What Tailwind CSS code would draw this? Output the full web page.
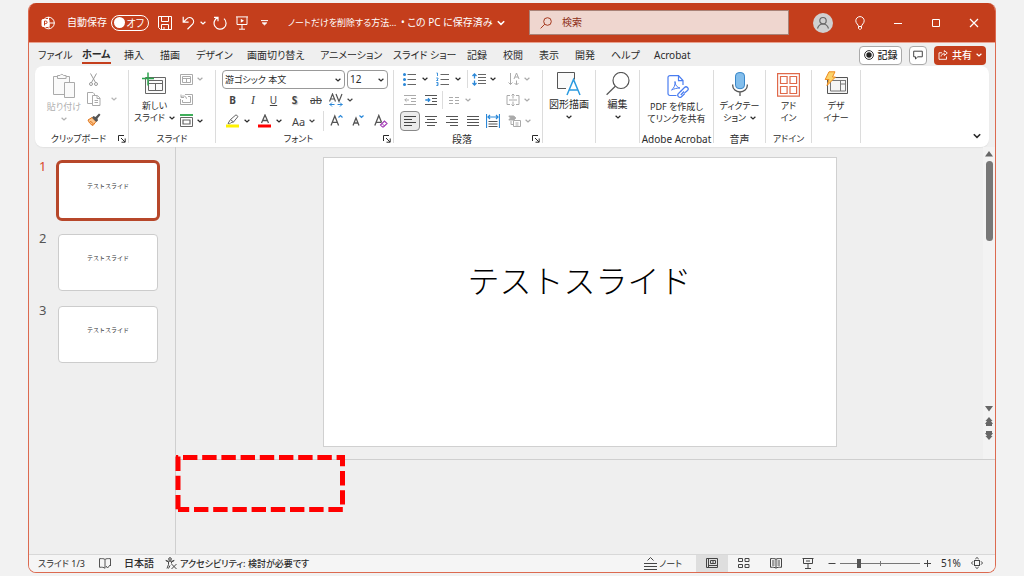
<!DOCTYPE html>
<html lang="ja">
<head>
<meta charset="utf-8">
<meta name="viewport" content="width=device-width, initial-scale=1">
<title>PowerPoint</title>
<script src="https://cdn.jsdelivr.net/npm/@tailwindcss/browser@4"></script>
</head>
<body class="h-screen overflow-hidden bg-[#f2f2f2] px-7 py-[3px] font-['Noto_Sans','Noto_Sans_CJK_JP',sans-serif] text-[10px] text-[#2b2b2b] [font-feature-settings:'palt']">
<svg class="hidden">
  <symbol id="chev" viewBox="0 0 6 4"><path d="M.6.7 3 3 5.4.7" fill="none" stroke="currentColor" stroke-width="1.2"/></symbol>
  <symbol id="launch" viewBox="0 0 8 8"><path d="M.5 6V.5H6M3 3l4 4M7.2 3.5v3.7H3.5" fill="none" stroke="currentColor"/></symbol>
</svg>
<div class="relative flex h-full flex-col overflow-hidden rounded-lg border border-t-0 border-[#dc6a50] bg-[#efefef]">

  <!-- Title bar -->
  <header class="flex h-[40px] shrink-0 items-center border-b border-[#e9a08d] bg-[#c43e1c] pl-3 text-white">
    <svg class="h-[14px] w-[14px]" viewBox="0 0 14 14" fill="none" stroke="#fff"><circle cx="7.500" cy="7" r="5.800"/><path d="M7.500 1v6h6M8 7v5.500"/><rect x="1" y="3.500" width="7" height="7" rx="1" fill="#fff"/><path d="M3.500 9.500v-4.500h1.300a1.300 1.300 0 0 1 0 2.600H3.500" stroke="#c43e1c"/></svg>
    <label class="ml-3 flex items-center whitespace-nowrap" for="autosave"><span class="w-[44px]">自動保存</span>
      <span class="relative flex h-4 w-[38px] items-center justify-end rounded-full border border-white pr-1 leading-none">
        <input id="autosave" type="checkbox" role="switch" class="absolute inset-0 m-0 cursor-pointer opacity-0">
        <span class="absolute left-0.5 h-[11px] w-[11px] rounded-full bg-white"></span>オフ
      </span></label>
    <button aria-label="保存" class="ml-[9px] w-[14px]"><svg viewBox="0 0 14 14" fill="none" stroke="#fff"><path d="M.5.5h13v13h-11l-2-2zM3.500.5v5h7v-5M3.500 13.500v-5h7v5M6 11v2"/></svg></button>
    <button aria-label="元に戻す" class="ml-2.5 flex items-center gap-1"><svg class="w-[14px]" viewBox="0 0 14 14" fill="none" stroke="#fff" stroke-width="1.200"><path d="M1.200.8v5.400h5.400M1.500 6l3.200-3.200a4 4 0 0 1 5.900 5.400L5.500 13.200"/></svg><svg class="h-1 w-1.5"><use href="#chev"/></svg></button>
    <button aria-label="やり直し" class="ml-[7px] w-[14px]"><svg viewBox="0 0 14 14" fill="none" stroke="#fff" stroke-width="1.200"><path d="M1 1.300h4v4M4.800 1.600a6 6 0 1 0 6.200 1"/></svg></button>
    <button aria-label="最初から開始" class="ml-2 w-[14px]"><svg viewBox="0 0 14 14" fill="none" stroke="#fff"><path d="M1 .9h12M2 1v7.500h10V1M7 8.500v4.500M4 13.200h6"/><path d="M5.800 2.700v4l3.200-2z" fill="#fff" stroke="none"/></svg></button>
    <button aria-label="クイック アクセス ツール バーのユーザー設定" class="ml-3 w-[7px]"><svg viewBox="0 0 7 6" fill="none" stroke="#fff"><path d="M0 .6h7"/><path d="M1.200 2.800h4.600L3.500 5z" fill="#fff" stroke-width=".8"/></svg></button>
    <button class="ml-5 flex w-[241px] items-center whitespace-nowrap text-left"><span class="w-[113px] text-[9px]">ノートだけを削除する方法…</span><span>• この PC に保存済み</span><svg class="ml-1 h-1.5 w-2"><use href="#chev"/></svg></button>
    <label for="search" class="flex h-[25px] min-w-0 max-w-[260px] flex-1 items-center border border-[#a98277] bg-[#efd6cf] pl-2.5 text-[#a5391f]">
      <svg class="mr-2.5 h-3 w-3 shrink-0" viewBox="0 0 12 12" fill="none" stroke="currentColor"><circle cx="7.500" cy="4.500" r="3.800"/><path d="M4.800 7.200.6 11.400"/></svg>
      <input id="search" type="search" placeholder="検索" class="min-w-0 flex-1 bg-transparent outline-none placeholder:text-[#8d2f18] placeholder:opacity-100">
    </label>
    <div class="ml-6 flex items-center">
      <button aria-label="アカウント" class="w-5"><svg viewBox="0 0 20 20"><circle cx="10" cy="10" r="10" fill="#d0d0d0"/><g fill="none" stroke="#666" stroke-width="1.200"><circle cx="10" cy="7.700" r="3.200"/><path d="M4.500 15.500C5.500 12.200 7.500 11 10 11s4.500 1.200 5.500 4.500"/></g></svg></button>
      <button aria-label="ヒント" class="ml-[22px] w-[10px]"><svg viewBox="0 0 10 14" fill="none" stroke="#fff"><path d="M3.500 10.500C3.500 8.500.8 7.600.8 4.800a4.200 4.200 0 0 1 8.400 0c0 2.800-2.700 3.700-2.700 5.700zM3.500 10.500v1.800l1 1h1l1-1v-1.800"/></svg></button>
      <button aria-label="最小化" class="ml-7 w-[10px]"><svg viewBox="0 0 10 10" stroke="#fff"><path d="M1 5.500h8"/></svg></button>
      <button aria-label="最大化" class="ml-7 w-[10px]"><svg viewBox="0 0 10 10" fill="none" stroke="#fff"><path d="M1.500 1.500h7v7h-7z"/></svg></button>
      <button aria-label="閉じる" class="ml-7 w-[10px]"><svg viewBox="0 0 10 10" stroke="#fff" stroke-width="1.200"><path d="m1 1 8 8M9 1 1 9"/></svg></button>
    </div>
  </header>

  <!-- Ribbon tabs -->
  <nav class="flex h-[23px] shrink-0 items-center whitespace-nowrap px-[9px] pt-px">
    <a href="#" class="w-[44px]">ファイル</a>
    <a href="#" class="w-[42px] font-bold"><span class="inline-block border-b-2 border-[#c43e1c]">ホーム</span></a>
    <a href="#" class="w-9">挿入</a>
    <a href="#" class="w-9">描画</a>
    <a href="#" class="w-[51px]">デザイン</a>
    <a href="#" class="w-[73px]">画面切り替え</a>
    <a href="#" class="w-[73px]">アニメーション</a>
    <a href="#" class="w-[74px]">スライド ショー</a>
    <a href="#" class="w-9">記録</a>
    <a href="#" class="w-9">校閲</a>
    <a href="#" class="w-9">表示</a>
    <a href="#" class="w-9">開発</a>
    <a href="#" class="w-[43px]">ヘルプ</a>
    <a href="#">Acrobat</a>
    <div class="ml-auto flex items-center gap-[7px]">
      <button class="flex h-[19px] w-[43px] items-center justify-center gap-1 rounded border border-[#aaa] bg-white font-medium"><svg class="w-[10px]" viewBox="0 0 10 10"><circle cx="5" cy="5" r="4.400" fill="none" stroke="#333"/><circle cx="5" cy="5" r="2.700" fill="#222"/></svg>記録</button>
      <button aria-label="コメント" class="flex h-[19px] w-[18px] items-center justify-center rounded border border-[#aaa] bg-white"><svg class="w-[10px]" viewBox="0 0 10 10" fill="none" stroke="#444"><path d="M.7 1.200h8.600v5.600H4.800L2.500 9V6.800H.7z"/></svg></button>
      <button class="flex h-[19px] w-[52px] items-center justify-center gap-1 rounded bg-[#c43e1c] font-medium text-white"><svg class="w-[10px]" viewBox="0 0 10 10" fill="none" stroke="#fff" stroke-width=".9"><path d="M4 2.800H1v6.500h7.500V6.500M3 6.500c.4-2 1.500-2.800 3.300-2.800V5.500L9.300 3 6.300.6v1.600"/></svg>共有<svg class="h-1 w-1.5"><use href="#chev"/></svg></button>
    </div>
  </nav>

  <!-- Ribbon -->
  <section class="mx-1.5 flex h-[81px] shrink-0 rounded-lg bg-white text-[9px] shadow-[0_1px_1px_#e2e2e2]">
    <div class="flex w-[93px] shrink-0 flex-col">
      <div class="flex h-[66px]">
        <button class="flex w-[50px] flex-col items-center whitespace-nowrap pl-2 pt-[7px] leading-[13px] text-[#b0b0b0]">
          <svg class="h-[25px] w-[24px]" viewBox="0 0 24 25" fill="#fafafa" stroke="#aaa"><path d="M1.500 3.500h16v18h-16z"/><path d="M5.500 2.500H8a2 2 0 0 1 3.600 0h2.500v3h-8.600z"/><path d="M12.500 9.500h10v15h-10z"/></svg>
          <span class="mt-0.5">貼り付け</span><svg class="mt-1 h-1 w-1.5"><use href="#chev"/></svg></button>
        <div class="flex flex-col pt-[3px]">
          <button aria-label="切り取り" class="flex h-[20px] items-center pl-1"><svg class="h-[13px] w-[9px]" viewBox="0 0 9 13" fill="none" stroke="#999"><path d="M1.500.5l5 9M7.500.5l-5 9"/><circle cx="2" cy="11" r="1.500"/><circle cx="7" cy="11" r="1.500"/></svg></button>
          <button aria-label="コピー" class="flex h-[20px] items-center gap-2.5 pl-0.5 text-[#b5b5b5]"><svg class="h-[14px] w-[14px]" viewBox="0 0 14 14" fill="#fff" stroke="#aaa"><path d="M5 11.500H.5v-11H6l1.500 1.500v2"/><path d="M5.500 3.500h5l2.500 2.500v7.500H5.500z"/><path d="M7.500 8.500h3.500M7.500 10.500h3.500M10 3.500v3h3"/></svg><svg class="h-1 w-1.5"><use href="#chev"/></svg></button>
          <button aria-label="書式のコピー/貼り付け" class="flex h-[20px] items-center pl-0.5"><svg class="h-[13px] w-[14px]" viewBox="0 0 14 13"><path d="M1 7l4-2.500 4 4L6 12.500C3.500 11.500 2 9.500 1 7z" fill="#fbc58d" stroke="#e0741a"/><path d="M3 8.500l2.500 1M4.500 12l2-2" stroke="#e0741a"/><path d="M5 4.500l1.500-1.500 2 1L12 .6l1.500 1.200L10.500 5.500 11 7.500 9.200 9z" fill="#555"/></svg></button>
        </div>
      </div>
      <div class="flex h-[14px] items-center"><span class="w-[87px] text-center">クリップボード</span><button aria-label="クリップボードのオプション" class="-ml-1 w-2"><svg class="h-2 w-2"><use href="#launch"/></svg></button></div>
    </div>
    <div class="my-1 w-px shrink-0 bg-[#dcdcdc]"></div>

    <div class="flex w-[86px] shrink-0 flex-col">
      <div class="flex h-[66px]">
        <button class="flex w-[51px] flex-col items-center whitespace-nowrap pt-1.5 leading-[13px]">
          <svg class="h-[26px] w-[25px]" viewBox="0 0 25 26" fill="none" stroke="#666"><path d="M3.500 5.500h20v16h-20z" fill="#fafafa"/><path d="M6.500 8.500h14v10h-14zM6.500 11.500h14M13.500 11.500v7"/><path d="M6 .5v13M0 6.500h12" stroke="#2da44e" stroke-width="1.500"/></svg>
          <span class="mt-px">新しい</span><span class="flex items-center gap-1 leading-[12px]">スライド<svg class="h-1 w-1.5"><use href="#chev"/></svg></span></button>
        <div class="flex flex-col pt-[3px]">
          <button aria-label="レイアウト" class="flex h-[20px] items-center gap-1 text-[#aaa]"><svg class="h-[11px] w-[13px]" viewBox="0 0 13 11" fill="none" stroke="#aaa"><path d="M.5.5h12v10H.5zM2.500 2.500h8v6h-8zM2.500 4.500h8M6.500 4.500v4"/></svg><svg class="h-1 w-1.5"><use href="#chev"/></svg></button>
          <button aria-label="リセット" class="flex h-[20px] items-center"><svg class="h-[12px] w-[13px]" viewBox="0 0 13 12" fill="none" stroke="#aaa"><path d="M5 1.500h7.500v10H.5V6M8 3.500h2.500v6h-8V7M1 1.500v3h3M1 4.300a3 3 0 0 1 5.500 1.500"/></svg></button>
          <button aria-label="セクション" class="flex h-[21px] items-center gap-1 pt-0.5"><svg class="h-[13px] w-[13px]" viewBox="0 0 13 13" fill="none" stroke="#666"><path d="M0 1h13" stroke="#3fae5a" stroke-width="2"/><path d="M.5 3.500h12v9H.5z"/><path d="M3 6h7v4H3z" stroke-width="1.200"/></svg><svg class="h-1 w-1.5"><use href="#chev"/></svg></button>
        </div>
      </div>
      <div class="h-[14px] text-center leading-[14px]">スライド</div>
    </div>
    <div class="my-1 w-px shrink-0 bg-[#dcdcdc]"></div>

    <div class="flex w-[177px] shrink-0 flex-col">
      <div class="flex h-6 items-center gap-0.5 pl-1.5 pt-0.5">
        <div class="relative"><select aria-label="フォント" class="block h-[19px] w-[123px] appearance-none rounded border border-[#999] bg-white pl-0.5 text-[9px] leading-[17px]"><option>游ゴシック 本文</option></select><svg class="pointer-events-none absolute right-1 top-2 h-1 w-1.5"><use href="#chev"/></svg></div>
        <div class="relative"><select aria-label="フォント サイズ" class="block h-[19px] w-[41px] appearance-none rounded border border-[#999] bg-white pl-0.5 text-[10px] leading-[17px]"><option>12</option></select><svg class="pointer-events-none absolute right-1 top-2 h-1 w-1.5"><use href="#chev"/></svg></div>
      </div>
      <div class="flex h-[20px] items-center pl-1.5 text-[10px] text-[#444]">
        <button class="w-[21px] font-bold">B</button><button class="w-5 font-['Liberation_Serif'] text-[12px] italic">I</button><button class="w-[21px] underline">U</button><button class="w-[21px] font-bold [text-shadow:1px_1px_1px_#bbb]">S</button><button class="w-[22px] line-through">ab</button>
        <button aria-label="文字の間隔" class="ml-0.5 flex items-center gap-1"><svg class="h-[14px] w-[14px]" viewBox="0 0 14 14" fill="none"><path d="M.5 8.500 3.500 1l3 7.500M1.500 6h4M7 1l3 7.500L13 1" stroke="#555" stroke-width="1.200"/><path d="M.5 11.500h5M8.500 11.500h5M3 9.500l-2 2 2 2M11 9.500l2 2-2 2" stroke="#2b88d8"/></svg><svg class="h-1 w-1.5"><use href="#chev"/></svg></button>
      </div>
      <div class="flex h-[22px] items-center pl-2.5">
        <button aria-label="蛍光ペンの色" class="flex items-center gap-1"><svg class="h-[14px] w-[14px]" viewBox="0 0 14 14" fill="none"><path d="M2 9.500 4.500 5.500 10 .8l2 1.700L7.500 8l-2.500.5L3.500 10zM4.500 5.500 7.500 8" stroke="#666"/><path d="M0 12h13" stroke="#fff200" stroke-width="3"/></svg><svg class="h-1 w-1.5"><use href="#chev"/></svg></button>
        <button aria-label="フォントの色" class="ml-2 flex items-center gap-1"><svg class="h-[14px] w-[14px]" viewBox="0 0 14 14" fill="none"><path d="M3.500 9 7 1l3.500 8M4.700 6.500h4.600" stroke="#555" stroke-width="1.300"/><path d="M0 12h13" stroke="#f00" stroke-width="3"/></svg><svg class="h-1 w-1.5"><use href="#chev"/></svg></button>
        <button class="ml-2.5 flex items-center gap-1 text-[11px] leading-none text-[#444]">Aa<svg class="h-1 w-1.5"><use href="#chev"/></svg></button>
        <span class="ml-2 mr-1.5 h-5 w-px bg-[#dcdcdc]"></span>
        <button aria-label="フォント サイズの拡大" class="w-[14px]"><svg viewBox="0 0 14 14" fill="none"><path d="M1 11.500 4.800 2l3.800 9.500M2.300 8.300h5" stroke="#555" stroke-width="1.300"/><path d="M8.500 3.500l2-2 2 2" stroke="#2b88d8" stroke-width="1.200"/></svg></button>
        <button aria-label="フォント サイズの縮小" class="ml-2 w-[14px]"><svg viewBox="0 0 14 14" fill="none"><path d="M1 11.500 4 4l3 7.500M2 9h4" stroke="#555" stroke-width="1.300"/><path d="M7.500 1.500l2 2 2-2" stroke="#2b88d8" stroke-width="1.200"/></svg></button>
        <button aria-label="書式のクリア" class="ml-2 w-[14px]"><svg viewBox="0 0 14 14" fill="none"><path d="M.8 11.500 4.800 1.500l2.800 7M2.300 8.300h5" stroke="#555" stroke-width="1.300"/><path d="M6.500 11l4-4 2.500 2.500-3.500 3.500h-1z" fill="#fff" stroke="#a33bb5" stroke-width="1.200"/><path d="M8 9.500l2.500 2.500" stroke="#a33bb5"/></svg></button>
      </div>
      <div class="flex h-[14px] items-center"><span class="w-[165px] text-center">フォント</span><button aria-label="フォントのオプション" class="ml-0.5 w-2"><svg class="h-2 w-2"><use href="#launch"/></svg></button></div>
    </div>
    <div class="my-1 w-px shrink-0 bg-[#dcdcdc]"></div>

    <div class="flex w-[148px] shrink-0 flex-col">
      <div class="flex h-6 items-center pl-[9px] pt-0.5">
        <button aria-label="箇条書き" class="flex items-center gap-1.5"><svg class="h-[14px] w-[13px]" viewBox="0 0 13 14"><path d="M4.500 2.500H13M4.500 7.500H13M4.500 12.500H13" stroke="#666"/><g fill="#2b88d8"><circle cx="1.500" cy="2.500" r="1.500"/><circle cx="1.500" cy="7.500" r="1.500"/><circle cx="1.500" cy="12.500" r="1.500"/></g></svg><svg class="h-1 w-1.5"><use href="#chev"/></svg></button>
        <button aria-label="段落番号" class="ml-2 flex items-center gap-1.5"><svg class="h-[14px] w-[13px]" viewBox="0 0 13 14" fill="none"><path d="M4.500 2.500H13M4.500 7.500H13M4.500 12.500H13" stroke="#666"/><path d="M.5 1h1v3M.3 6h1.700v1L.5 8.500h1.700M.3 10.500h1.700v3H.3M.8 12H2" stroke="#2b88d8" stroke-width=".9"/></svg><svg class="h-1 w-1.5"><use href="#chev"/></svg></button>
        <span class="ml-1.5 mr-1 h-[18px] w-px bg-[#dcdcdc]"></span>
        <button aria-label="行間" class="flex items-center gap-1"><svg class="h-[13px] w-[14px]" viewBox="0 0 14 13" fill="none"><path d="M6 1.500h8M6 4.500h8M6 7.500h8M6 10.500h8" stroke="#666"/><path d="M2.500 1v4.500M2.500 7.500V12M.5 3l2-2 2 2M.5 10l2 2 2-2" stroke="#2b88d8" stroke-width="1.300"/></svg><svg class="h-1 w-1.5"><use href="#chev"/></svg></button>
        <button aria-label="文字列の方向" class="ml-3 flex items-center gap-1 text-[#aaa]"><svg class="h-[14px] w-[12px]" viewBox="0 0 12 14" fill="none" stroke="#aaa"><path d="M2.500 1v11.500M.5 10.500l2 2 2-2M6 7l2.500-6L11 7M7 5h3M8.500 8.500v4M6.500 11l2 2 2-2"/></svg><svg class="h-1 w-1.5"><use href="#chev"/></svg></button>
      </div>
      <div class="flex h-[20px] items-center pl-2.5">
        <button aria-label="インデントを減らす" class="w-3"><svg viewBox="0 0 12 12" fill="none" stroke="#aaa"><path d="M0 1.500h12M7 4.500h5M7 7.500h5M0 10.500h12M.8 6H5M2.500 4.300.8 6l1.700 1.700"/></svg></button>
        <button aria-label="インデントを増やす" class="ml-[9px] w-3"><svg viewBox="0 0 12 12" fill="none" stroke="#555"><path d="M0 1.500h12M7 4.500h5M7 7.500h5M0 10.500h12"/><path d="M.3 6h4.500M3 4.200 4.800 6 3 7.800" stroke="#2b88d8" stroke-width="1.300"/></svg></button>
        <span class="ml-[5px] mr-1.5 h-[18px] w-px bg-[#dcdcdc]"></span>
        <button aria-label="段の追加または削除" class="flex items-center gap-1.5 text-[#aaa]"><svg class="h-[9px] w-[10px]" viewBox="0 0 10 9" stroke="#aaa"><path d="M0 1.500h4M6 1.500h4M0 4.500h4M6 4.500h4M0 7.500h4M6 7.500h4"/></svg><svg class="h-1 w-1.5"><use href="#chev"/></svg></button>
        <button aria-label="文字の配置" class="ml-[35px] flex items-center gap-1 text-[#aaa]"><svg class="h-[12px] w-[14px]" viewBox="0 0 14 12" fill="none" stroke="#aaa"><path d="M4 1.500H1v9h3M10 1.500h3v9h-3M3 6h8M7 0v4.500M7 7.500V12M5.500 1.500 7 0l1.500 1.500M5.500 10.500 7 12l1.500-1.500"/></svg><svg class="h-1 w-1.5"><use href="#chev"/></svg></button>
      </div>
      <div class="flex h-[22px] items-center pl-1.5">
        <button aria-label="左揃え" class="flex h-5 w-5 items-center justify-center rounded border border-[#888] bg-[#ebebeb]"><svg class="h-[12px] w-[12px]" viewBox="0 0 12 12" stroke="#444"><path d="M0 1.500h12M0 4.500h8M0 7.500h12M0 10.500h8"/></svg></button>
        <button aria-label="中央揃え" class="ml-[5px] w-3"><svg viewBox="0 0 12 12" stroke="#555"><path d="M0 1.500h12M2 4.500h8M0 7.500h12M2 10.500h8"/></svg></button>
        <button aria-label="右揃え" class="ml-[9px] w-3"><svg viewBox="0 0 12 12" stroke="#555"><path d="M0 1.500h12M4 4.500h8M0 7.500h12M4 10.500h8"/></svg></button>
        <button aria-label="両端揃え" class="ml-[9px] w-3"><svg viewBox="0 0 12 12" stroke="#555"><path d="M0 1.500h12M0 4.500h12M0 7.500h12M0 10.500h12"/></svg></button>
        <button aria-label="均等割り付け" class="ml-[7px] w-[14px]"><svg viewBox="0 0 14 14" fill="none"><path d="M2.500 7.500h9M2.500 10h9M2.500 12.500h9" stroke="#555"/><path d="M.5 0v14M13.500 0v14M2 3h10M4 1 2 3l2 2M10 1l2 2-2 2" stroke="#2b88d8" stroke-width="1.200"/></svg></button>
        <button aria-label="SmartArt に変換" class="ml-2 flex items-center gap-1 text-[#aaa]"><svg class="h-[12px] w-[13px]" viewBox="0 0 13 12" fill="none" stroke="#aaa"><path d="M.8 1h5l2 2-2 2h-5l1.700-2z" fill="#aaa"/><path d="M3 6v3.500h3"/><path d="M5.500 5.500h7v6h-7zM7.500 8h3M7.500 10h3"/></svg><svg class="h-1 w-1.5"><use href="#chev"/></svg></button>
      </div>
      <div class="flex h-[14px] items-center text-[10px]"><span class="w-[136px] text-center">段落</span><button aria-label="段落のオプション" class="ml-0.5 w-2"><svg class="h-2 w-2"><use href="#launch"/></svg></button></div>
    </div>
    <div class="my-1 w-px shrink-0 bg-[#dcdcdc]"></div>

    <button class="flex w-[52px] shrink-0 flex-col items-center whitespace-nowrap pt-1.5 text-[10px] leading-[13px]">
      <svg class="h-[25px] w-[24px]" viewBox="0 0 24 25" fill="none"><path d="M9 16.500H.5V.5h17v7" fill="#fafafa" stroke="#555"/><path d="M10 23 16.500 7.500 23 23M12.300 18h8.500" stroke="#2b9be0" stroke-width="1.500"/></svg>
      <span class="mt-px">図形描画</span><svg class="mt-1 h-1 w-1.5"><use href="#chev"/></svg></button>
    <div class="my-1 w-px shrink-0 bg-[#dcdcdc]"></div>
    <button class="flex w-[43px] shrink-0 flex-col items-center whitespace-nowrap pt-1.5 text-[10px] leading-[13px]">
      <svg class="h-[25px] w-[24px]" viewBox="0 0 24 25" fill="none" stroke="#555" stroke-width="1.200"><circle cx="15" cy="8.500" r="8"/><path d="M9.300 14.200.6 22.800"/></svg>
      <span class="mt-px">編集</span><svg class="mt-1 h-1 w-1.5"><use href="#chev"/></svg></button>
    <div class="my-1 w-px shrink-0 bg-[#dcdcdc]"></div>

    <div class="flex w-[73px] shrink-0 flex-col items-center whitespace-nowrap">
      <button class="flex h-[66px] flex-col items-center pt-[9px] leading-[12px]"><svg class="ml-1 h-[24px] w-[22px]" viewBox="0 0 22 24" fill="none" stroke="#4a7df0" stroke-width="1.200"><path d="M9.500 20.500H3a2 2 0 0 1-2-2V2.600A2 2 0 0 1 3 .6h8.500L16 5.500V10M11.500.6v5H16"/><path d="M4.500 15c2.500-1.500 4-5.500 3.500-8.500 0 4 2.500 6 5 6.500-3 0-6 .8-8.500 2z" stroke-width="1"/><path d="m14 16 3.500-3.500a2 2 0 0 1 3 3L17.500 18M17 16.500 13.800 20"/><path d="m14.500 15.500-3 3a2 2 0 0 0 3 3.200l3.300-3.200"/></svg>
      <span class="mt-0.5">PDF を作成し<br>てリンクを共有</span></button>
      <div class="h-[14px] text-[10px] leading-[14px]">Adobe Acrobat</div>
    </div>
    <div class="my-1 w-px shrink-0 bg-[#dcdcdc]"></div>

    <div class="flex w-[51px] shrink-0 flex-col items-center whitespace-nowrap">
      <button class="flex h-[66px] flex-col items-center pt-1.5 leading-[12px]"><svg class="h-[26px] w-[16px]" viewBox="0 0 16 26" fill="none"><rect x="3.500" y=".6" width="9" height="16" rx="3.500" fill="#83beec" stroke="#3a87c8"/><path d="M.7 12.500v1a7.300 6.500 0 0 0 14.600 0v-1M8 20v4" stroke="#555" stroke-width="1.300"/></svg>
      <span class="mt-0.5">ディクテー</span><span class="flex items-center gap-1">ション<svg class="h-1 w-1.5"><use href="#chev"/></svg></span></button>
      <div class="h-[14px] text-[10px] leading-[14px]">音声</div>
    </div>
    <div class="my-1 w-px shrink-0 bg-[#dcdcdc]"></div>

    <div class="flex w-[45px] shrink-0 flex-col items-center whitespace-nowrap">
      <button class="flex h-[66px] flex-col items-center pt-[7px] leading-[12px]"><svg class="h-[24px] w-[23px]" viewBox="0 0 23 24" fill="none" stroke="#e0694a" stroke-width="1.200"><path d="M.6.6h21.800v22.600H.6zM3.500 3.500h6.600v7H3.500zM13 3.500h6.600v7H13zM3.500 13.500h6.600v7H3.500zM13 13.500h6.600v7H13z"/></svg>
      <span class="mt-[3px]">アド<br>イン</span></button>
      <div class="h-[14px] leading-[14px]">アドイン</div>
    </div>
    <div class="my-1 w-px shrink-0 bg-[#dcdcdc]"></div>

    <button class="flex w-[48px] shrink-0 flex-col items-center whitespace-nowrap pt-[5px] leading-[12px]"><svg class="h-[26px] w-[25px]" viewBox="0 0 25 26" fill="none"><path d="M3.500 6.500h20v16h-20z" fill="#f5f5f5" stroke="#555"/><path d="M6 9.500h15.500M6.500 9v11h15V9M16.500 9.500V20M16.500 13h5" stroke="#777"/><path d="M5 .8h6L8.500 6h3L3 14.500 5 8.500H1.200z" fill="#fbd26a" stroke="#ee8a1c"/></svg>
      <span class="mt-[3px]">デザ<br>イナー</span></button>
    <div class="my-1 w-px shrink-0 bg-[#dcdcdc]"></div>
    <button aria-label="リボンを折りたたむ" class="mb-2 ml-auto mr-2 self-end"><svg class="h-1.5 w-2"><use href="#chev"/></svg></button>
  </section>

  <!-- Workspace -->
  <main class="flex min-h-0 flex-1">
    <aside class="flex w-[147px] shrink-0 flex-col gap-4 border-r border-[#cfcfcf] pl-[9px] pt-[15px] text-[13px]">
      <button class="flex h-14 items-start text-[#d8482a]"><span class="w-[20px] pl-px text-left leading-[9px]">1</span><span class="-mx-0.5 -my-0.5 flex h-[61px] w-[104px] justify-center rounded-md border-[3px] border-[#b7472a] bg-white pt-[19px] text-[6px] leading-[8px] text-[#333] [font-feature-settings:normal]">テストスライド</span></button>
      <button class="flex h-14 items-start text-[#555]"><span class="w-[20px] pl-px text-left leading-[9px]">2</span><span class="flex h-[57px] w-[100px] justify-center rounded border border-[#ccc] bg-white pt-[19px] text-[6px] leading-[8px] text-[#333] [font-feature-settings:normal]">テストスライド</span></button>
      <button class="flex h-14 items-start text-[#555]"><span class="w-[20px] pl-px text-left leading-[9px]">3</span><span class="flex h-[57px] w-[100px] justify-center rounded border border-[#ccc] bg-white pt-[19px] text-[6px] leading-[8px] text-[#333] [font-feature-settings:normal]">テストスライド</span></button>
    </aside>
    <div class="flex min-w-0 flex-1 flex-col">
      <div class="flex min-h-0 flex-1">
        <div class="flex min-w-0 flex-1 justify-center pt-[10px]">
          <div class="flex h-[290px] w-[514px] flex-col items-center border border-[#d0d0d0] bg-white pt-[99px] font-['Noto_Sans_CJK_JP',sans-serif]">
            <h1 class="whitespace-nowrap text-[32px] font-light leading-[44px] text-black [font-feature-settings:normal]">テストスライド</h1>
          </div>
        </div>
        <div class="flex w-3 flex-col items-center bg-[#f3f3f3] pt-1">
          <svg class="h-[6px] w-[8px]" viewBox="0 0 8 6"><path d="M4 0l4 5.500H0z" fill="#666"/></svg>
          <div class="mt-1 h-[80px] w-[7px] rounded bg-[#777]"></div>
          <svg class="mb-[18px] mt-auto h-[36px] w-[8px]" viewBox="0 0 8 36" fill="#666"><path d="M0 1h8L4 6.500zM4 12l3.500 4H6l2 3H7v2H1v-2H0l2-3H.5zM1 26h6v2h1l-2 3h1.500L4 35 .5 31H2l-2-3h1z"/></svg>
        </div>
      </div>
      <div class="relative h-[95px] shrink-0 border-t border-[#cfcfcf]">
        <svg class="absolute -left-px -top-[5px] h-[57px] w-[170px]" viewBox="175 455 170 57" fill="none" stroke="#f00" stroke-width="5" stroke-dasharray="14.400 4.800"><path d="M176 457.500H345" stroke-dashoffset="12.200"/><path d="M342.500 455V507" stroke-dashoffset="3.200"/><path d="M178 509.500H343" stroke-dashoffset="3.200"/><path d="M178 456.500V510"/></svg>
      </div>
    </div>
  </main>

  <!-- Status bar -->
  <footer class="flex h-[18px] shrink-0 items-center whitespace-nowrap border-t border-[#d8d8d8] bg-[#f5f5f5] pb-px pl-[9px] pr-3 leading-none">
    <span class="w-[61px] text-[9px]">スライド 1/3</span>
    <svg class="h-[11px] w-[12px]" viewBox="0 0 12 11" fill="none" stroke="#555"><path d="M6 1.500C5 .5 3 .5.500.7v8.600C3 9.100 5 9.300 6 10.300M6 1.500C7 .5 9 .5 11.500.7V8M6 1.500v8.800M7 8l1.500 2 3-3.500"/></svg>
    <span class="ml-[13px] w-[41px] font-medium">日本語</span>
    <svg class="h-[12px] w-[12px]" viewBox="0 0 12 12" fill="none" stroke="#444"><circle cx="5" cy="2" r="1.300"/><path d="M.8 3.500 3.500 5v2.500L2 11.500M9.200 3.500 6.500 5v1.500M.8 3.500C3 4.500 7 4.500 9.200 3.500M5 8.500l-1.500 3M6.500 7l5 5M11.500 7l-5 5"/></svg>
    <button class="ml-[3px] text-[9px] font-medium">アクセシビリティ: 検討が必要です</button>
    <div class="ml-auto flex items-center">
      <button class="flex items-center gap-0.5 text-[9px]"><svg class="h-[13px] w-[13px]" viewBox="0 0 13 13" fill="none" stroke="#444"><path d="M0 6.500h13M0 9.500h13M0 12.500h13M3.500 3.500l3-3 3 3"/></svg>ノート</button>
      <button aria-label="標準" class="ml-3.5 flex h-[17px] w-8 items-center justify-center bg-[#dedede]"><svg class="h-[10px] w-[12px]" viewBox="0 0 12 10" fill="none" stroke="#444"><path d="M.5.5h11v9H.5zM2.500.5v9M4.500 2.500h5v3h-5zM2.500 7.500h9M6 4h2"/></svg></button>
      <button aria-label="スライド一覧" class="ml-2.5 w-3"><svg viewBox="0 0 12 10" fill="none" stroke="#444"><path d="M.5.5h4v3h-4zM7 .5h4v3H7zM.5 6.500h4v3h-4zM7 6.500h4v3H7z"/></svg></button>
      <button aria-label="閲覧表示" class="ml-5 w-3"><svg viewBox="0 0 12 11" fill="none" stroke="#444"><path d="M6 1.200C5 .5 3 .5.500.6v8.700C3 9.100 5 9.300 6 10.200 7 9.300 9 9.100 11.500 9.300V.6C9 .5 7 .5 6 1.200zM6 1v9M2 3h2.500M2 5h2.500M2 7h2.500M7.500 3H10M7.500 5H10M7.500 7H10"/></svg></button>
      <button aria-label="スライド ショー" class="ml-5 w-3"><svg viewBox="0 0 12 12" fill="none" stroke="#444"><path d="M.5 1.500h11M1.500 1.500v5h9v-5M6 6.500V11M3 11.500h6M4 4h4"/></svg></button>
      <button aria-label="縮小" class="ml-3.5 w-2"><svg viewBox="0 0 8 8" stroke="#444"><path d="M.5 4.500h7"/></svg></button>
      <div class="relative ml-1 flex h-3 w-20 items-center">
        <span class="absolute left-1/2 top-1 h-[5px] w-px bg-[#777]"></span>
        <input type="range" aria-label="ズーム" min="0" max="100" value="22" class="relative h-3 w-full appearance-none bg-transparent [&::-webkit-slider-runnable-track]:h-px [&::-webkit-slider-runnable-track]:bg-[#777] [&::-webkit-slider-thumb]:-mt-1 [&::-webkit-slider-thumb]:h-[9px] [&::-webkit-slider-thumb]:w-1 [&::-webkit-slider-thumb]:appearance-none [&::-webkit-slider-thumb]:bg-[#555]">
      </div>
      <button aria-label="拡大" class="ml-[3px] w-2"><svg viewBox="0 0 8 8" stroke="#444"><path d="M1 4.500h7M4.500 1v7"/></svg></button>
      <button class="ml-2.5 w-[22px] text-left">51%</button>
      <button aria-label="現在のウィンドウに合わせる" class="ml-2 w-3"><svg viewBox="0 0 12 12" fill="none" stroke="#444"><rect x="3.500" y="3.500" width="5" height="5"/><path d="M4.300 2 6 .5 7.700 2M4.300 10 6 11.500 7.700 10M2 4.300.5 6 2 7.700M10 4.300 11.500 6 10 7.700"/></svg></button>
    </div>
  </footer>
</div>
</body>
</html>
